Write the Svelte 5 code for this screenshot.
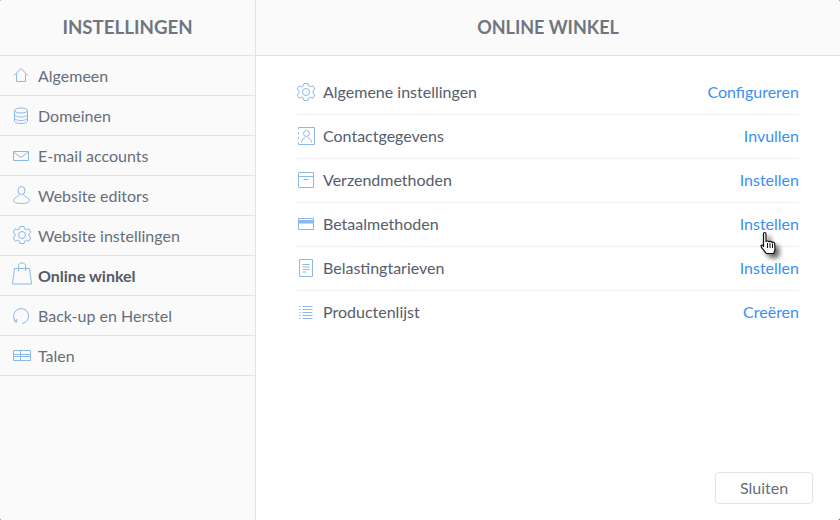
<script>
  const nav = [
    { label: 'Algemeen', icon: 'home' },
    { label: 'Domeinen', icon: 'db' },
    { label: 'E-mail accounts', icon: 'mail' },
    { label: 'Website editors', icon: 'user' },
    { label: 'Website instellingen', icon: 'gear' },
    { label: 'Online winkel', icon: 'bag', active: true },
    { label: 'Back-up en Herstel', icon: 'backup' },
    { label: 'Talen', icon: 'table' }
  ];
  const rows = [
    { label: 'Algemene instellingen', action: 'Configureren', icon: 'gear' },
    { label: 'Contactgegevens', action: 'Invullen', icon: 'contact' },
    { label: 'Verzendmethoden', action: 'Instellen', icon: 'box' },
    { label: 'Betaalmethoden', action: 'Instellen', icon: 'card' },
    { label: 'Belastingtarieven', action: 'Instellen', icon: 'doc' },
    { label: 'Productenlijst', action: 'Creëren', icon: 'list' }
  ];
</script>

{#snippet icon(name)}
  <svg class="ic" width="20" height="20" viewBox="0 0 20 20" fill="none" stroke="#8cb8ea" stroke-width="1">
    {#if name === 'home'}
      <path d="M2 10.500 9 3.500l7 7M4.500 8.500v8h9v-8" />
    {:else if name === 'db'}
      <ellipse cx="9" cy="5.500" rx="6.500" ry="2.500" />
      <path d="M2.500 5.500v10.500c0 1.500 3 2.500 6.500 2.500s6.500-1 6.500-2.500V5.500M2.500 9.500c0 1.500 3 2.500 6.500 2.500s6.500-1 6.500-2.500M2.500 13c0 1.500 3 2.500 6.500 2.500s6.500-1 6.500-2.500" />
    {:else if name === 'mail'}
      <path d="M1.500 6.500h15v9h-15zM1.500 7 9 12.500 16.500 7" />
    {:else if name === 'user'}
      <ellipse cx="9.500" cy="5.500" rx="3.500" ry="4" />
      <path d="M7.500 9c0 2.500-6 3.500-6 6.500 0 2 3.500 3 8 3s8-1 8-3c0-3-6-4-6-6.500" />
    {:else if name === 'gear'}
      <circle cx="10" cy="10" r="3.500" />
      <path d="M8 1.500h4l.7 2.400 1.800.9 2.300-1 2 3.400-1.800 1.600v2.400l1.800 1.600-2 3.400-2.300-1-1.800.9-.7 2.400H8l-.7-2.400-1.800-.9-2.300 1-2-3.400 1.800-1.600V8.800L1.200 7.200l2-3.400 2.300 1 1.800-.9z" stroke-linejoin="round" />
    {:else if name === 'bag'}
      <path d="M2.500 3.500h15l2 15.500h-19zM6.500 6V.5c0-1.500 1.500-2.500 3.500-2.500s3.500 1 3.500 2.500V6" />
    {:else if name === 'backup'}
      <path d="M4 16.500A7.500 7.500 0 1 1 10 18.500M1.500 14.500 4 17.500l1-3.500" />
    {:else if name === 'table'}
      <path d="M1.500 5.500h17v10h-17zM1.500 9.500h17M1.500 11.500h17M8.500 5.500v10" />
    {:else if name === 'contact'}
      <path d="M2.500 3.500v-2h16v17h-16v-2M2.500 6v2M2.500 11v2" />
      <circle cx="10.500" cy="7.500" r="3" />
      <path d="M5.500 16.500c0-3.500 2.500-4 3.500-5M15.500 16.500c0-3.500-2.500-4-3.500-5" />
    {:else if name === 'box'}
      <path d="M2.500 2.500h15v15h-15zM2.500 6.500h15M7.500 9.500h5" />
    {:else if name === 'card'}
      <rect x="2.500" y="4.500" width="15" height="11" />
      <rect x="2.500" y="6" width="15" height="3.500" fill="#8cb8ea" stroke="none" />
    {:else if name === 'doc'}
      <path d="M3.500 1.500h13v17h-13zM6.500 6.500h7M6.500 9h7M6.500 11.500h7M6.500 14h4" />
    {:else if name === 'list'}
      <path d="M6.500 4.500h10M6.500 7.500h10M6.500 10.500h10M6.500 13.500h10M6.500 16.500h10" />
      <path d="M3 4.500h1.500M3 7.500h1.500M3 10.500h1.500M3 13.500h1.500M3 16.500h1.500" />
    {/if}
  </svg>
{/snippet}

<div class="dialog">
  <aside class="side">
    <h2 class="head">INSTELLINGEN</h2>
    <ul class="nav">
      {#each nav as item}
        <li class:active={item.active}>
          {@render icon(item.icon)}
          <span>{item.label}</span>
        </li>
      {/each}
    </ul>
  </aside>
  <main class="main">
    <h2 class="head">ONLINE WINKEL</h2>
    <ul class="rows">
      {#each rows as row}
        <li>
          {@render icon(row.icon)}
          <span class="label">{row.label}</span>
          <a href="#top" class="action">{row.action}</a>
        </li>
      {/each}
    </ul>
    <div class="foot">
      <button type="button">Sluiten</button>
    </div>
  </main>
  <svg class="cursor" width="30" height="34" viewBox="0 0 30 34">
    <defs>
      <filter id="sh" x="-40%" y="-40%" width="200%" height="200%">
        <feDropShadow dx="4" dy="4" stdDeviation="2.500" flood-color="#000" flood-opacity=".6" />
      </filter>
    </defs>
    <path filter="url(#sh)" d="M5.500 1.500c1 0 1.500.7 1.500 1.700v7.300c.5-.7 2.500-.7 3 .3.700-.6 2.500-.5 3 .6.800-.5 2.500-.3 2.700 1.300l.3 5c0 2.500-1 3.800-1.500 4.800H7.500C6.500 21 3 17.500 2.300 16c-.5-1-.2-1.800.7-1.800.8 0 1.200.7 1.500 1.300V3.200c0-1 .3-1.700 1-1.700z" fill="#fff" stroke="#111" stroke-width="1.200" stroke-linejoin="round" />
    <path d="M8.500 12v5M11 12v5M13.500 12.500V17" stroke="#111" stroke-width="1" fill="none" />
  </svg>
</div>

<style>
  :global(body) {
    margin: 0;
    background: #3a3a3a;
  }
  .dialog {
    position: relative;
    display: flex;
    width: 840px;
    height: 520px;
    overflow: hidden;
    border-radius: 2px;
    background: #fff;
    font-family: Lato, "Open Sans", sans-serif;
    font-size: 16px;
    color: #666e7a;
  }
  .side {
    width: 255px;
    flex: none;
    background: #fafafa;
    border-right: 1px solid #dfe4ea;
  }
  .main {
    flex: 1;
    display: flex;
    flex-direction: column;
    min-width: 0;
  }
  .head {
    margin: 0;
    height: 55px;
    line-height: 55px;
    text-align: center;
    font-size: 18px;
    font-weight: 700;
    color: #6f7680;
    background: #fafafa;
    border-bottom: 1px solid #dfe4ea;
  }
  .side .head {
    font-size: 18.700px;
  }
  .nav, .rows {
    list-style: none;
    margin: 0;
    padding: 0;
  }
  .nav li {
    display: flex;
    align-items: center;
    height: 39px;
    padding-left: 12px;
    gap: 6px;
    border-bottom: 1px solid #dfe4ea;
  }
  .nav li span {
    margin-bottom: 1px;
  }
  .nav li.active {
    font-weight: 700;
    color: #545b67;
  }
  .rows {
    margin: 15px 41px 0 40px;
  }
  .rows li {
    display: flex;
    align-items: center;
    height: 43px;
    gap: 7px;
    border-bottom: 1px solid #f1f1f1;
    color: #565d6a;
  }
  .rows li:last-child {
    border-bottom: 0;
  }
  .rows li span, .rows li a {
    margin-bottom: 2px;
  }
  .ic {
    flex: none;
    overflow: visible;
    margin-bottom: 1px;
  }
  .label {
    flex: 1;
  }
  .action {
    color: #3a8ff5;
    text-decoration: none;
  }
  .foot {
    margin-top: auto;
    display: flex;
    justify-content: flex-end;
    padding: 0 27px 16px 0;
  }
  button {
    width: 98px;
    height: 32px;
    padding: 0 0 2px;
    border: 1px solid #dfe3e8;
    border-radius: 4px;
    background: #fff;
    font: inherit;
    color: #666e7a;
  }
  .cursor {
    position: absolute;
    left: 759px;
    top: 231px;
  }
</style>
